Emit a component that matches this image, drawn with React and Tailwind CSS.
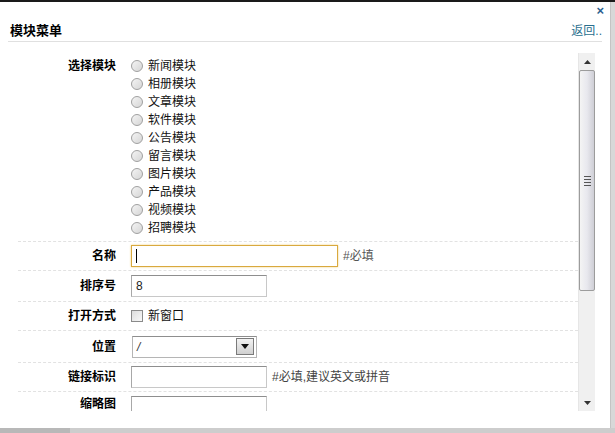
import React from "react";

const font = { fontFamily: '"Liberation Sans", "Noto Sans CJK SC", sans-serif' };

const modules = [
    "新闻模块",
    "相册模块",
    "文章模块",
    "软件模块",
    "公告模块",
    "留言模块",
    "图片模块",
    "产品模块",
    "视频模块",
    "招聘模块",
];

const Radio = () => (
    <span className="inline-block w-[12px] h-[12px] rounded-full border border-[#a0a0a0] bg-gradient-to-br from-[#f4f4f4] to-[#d6d6d6] shrink-0" />
);

const Label = ({ children }) => (
    <div className="w-[98px] text-right font-bold text-[12px] text-black shrink-0">
        {children}
    </div>
);

const Row = ({ label, h, children }) => (
    <div className={`flex items-center ${h} border-b border-dashed border-[#e2e2e2]`}>
        <Label>{label}</Label>
        <div className="ml-[15px] flex items-center">{children}</div>
    </div>
);

const TextInput = ({ w, value, focus }) => (
    <div
        className={`${w} h-[22px] flex items-center px-[4px] text-[12px] text-[#222] bg-white ${
            focus
                ? "border border-[#d9a93e] shadow-[0_0_2px_#f0d080]"
                : "border border-[#c8c8c8] border-t-[#8e8e8e] border-l-[#a8a8a8]"
        }`}
    >
        {focus ? <span className="w-px h-[14px] bg-black" /> : value}
    </div>
);

export default function App() {
    return (
        <div
            className="w-[615px] h-[433px] bg-[#d6d6d6] overflow-hidden flex flex-col"
            style={font}
        >
            <div className="h-[2px] bg-[#1a1a1a]" />
            <div className="flex">
                <div className="w-[610px] h-[426px] bg-white flex flex-col relative">
                    <span className="absolute right-[6px] top-[2px] text-[13px] font-bold text-[#2b5f8f] leading-none">
                        ×
                    </span>
                    <div className="mx-[8px] mt-[18px] h-[22px] border-b border-[#e0e0e0] flex items-center justify-between">
                        <span className="ml-[2px] text-[13px] font-bold text-black">模块菜单</span>
                        <span className="text-[12px] text-[#2a6f8e]">返回..</span>
                    </div>
                    <div className="flex ml-[18px] mt-[7px] h-[362px]">
                        <div className="w-[560px] overflow-hidden">
                            <div className="flex border-b border-dashed border-[#e2e2e2] pt-[8px] pb-[4px]">
                                <div className="w-[98px] text-right font-bold text-[12px] text-black h-[18px] leading-[18px] shrink-0">
                                    选择模块
                                </div>
                                <div className="ml-[15px] flex flex-col">
                                    {modules.map((m) => (
                                        <div key={m} className="flex items-center h-[18px] gap-[5px]">
                                            <Radio />
                                            <span className="text-[12px] text-[#111]">{m}</span>
                                        </div>
                                    ))}
                                </div>
                            </div>
                            <Row label="名称" h="h-[29px]">
                                <TextInput w="w-[207px]" focus />
                                <span className="ml-[5px] text-[12px] text-[#555]">#必填</span>
                            </Row>
                            <Row label="排序号" h="h-[31px]">
                                <TextInput w="w-[136px]" value="8" />
                            </Row>
                            <Row label="打开方式" h="h-[29px]">
                                <span className="w-[12px] h-[12px] border border-[#8a8a8a] bg-gradient-to-br from-[#dcdcdc] to-[#f8f8f8]" />
                                <span className="ml-[5px] text-[12px] text-[#111]">新窗口</span>
                            </Row>
                            <Row label="位置" h="h-[32px]">
                                <div className="ml-[1px] w-[125px] h-[22px] border border-[#b5b5b5] border-t-[#8e8e8e] flex items-center justify-between pl-[4px] pr-[2px]">
                                    <span className="text-[12px] italic text-[#333]">/</span>
                                    <span className="w-[18px] h-[17px] border border-[#7a7a7a] bg-gradient-to-b from-[#f2f2f2] to-[#d0d0d0] flex items-center justify-center">
                                        <svg width="8" height="5" viewBox="0 0 8 5">
                                            <path d="M0 0h8L4 5z" fill="#111" />
                                        </svg>
                                    </span>
                                </div>
                            </Row>
                            <Row label="链接标识" h="h-[29px]">
                                <TextInput w="w-[136px]" />
                                <span className="ml-[5px] text-[12px] text-[#444]">#必填,建议英文或拼音</span>
                            </Row>
                            <div className="flex items-start pt-[4px]">
                                <div className="w-[98px] text-right font-bold text-[12px] text-black shrink-0 leading-[16px]">
                                    缩略图
                                </div>
                                <div className="ml-[15px] w-[136px] h-[22px] border border-[#c8c8c8] border-t-[#8e8e8e] border-l-[#a8a8a8]" />
                            </div>
                        </div>
                        <div className="w-[17px] mt-[4px] h-[358px] bg-[#f0f0f0] border-l border-[#e6e6e6] flex flex-col">
                            <div className="h-[17px] flex items-center justify-center">
                                <svg width="7" height="4" viewBox="0 0 7 4">
                                    <path d="M0 4h7L3.5 0z" fill="#333" />
                                </svg>
                            </div>
                            <div className="h-[221px] border border-[#9c9c9c] rounded-[2px] bg-gradient-to-r from-[#f4f4f4] via-[#e8e8ee] to-[#cfcfd6] flex items-center justify-center">
                                <div className="flex flex-col gap-[2px]">
                                    <span className="w-[7px] h-px bg-[#555]" />
                                    <span className="w-[7px] h-px bg-[#555]" />
                                    <span className="w-[7px] h-px bg-[#555]" />
                                    <span className="w-[7px] h-px bg-[#555]" />
                                </div>
                            </div>
                            <div className="flex-1" />
                            <div className="h-[17px] flex items-center justify-center">
                                <svg width="7" height="4" viewBox="0 0 7 4">
                                    <path d="M0 0h7L3.5 4z" fill="#333" />
                                </svg>
                            </div>
                        </div>
                    </div>
                </div>
                <div className="w-[5px] h-[426px] bg-[#d8d8d8] border-l border-[#c4c4c4]" />
            </div>
            <div className="h-[5px] flex">
                <div className="w-[70px] bg-[#b8b8b8]" />
                <div className="flex-1 bg-[#cdcdcd]" />
            </div>
        </div>
    );
}
